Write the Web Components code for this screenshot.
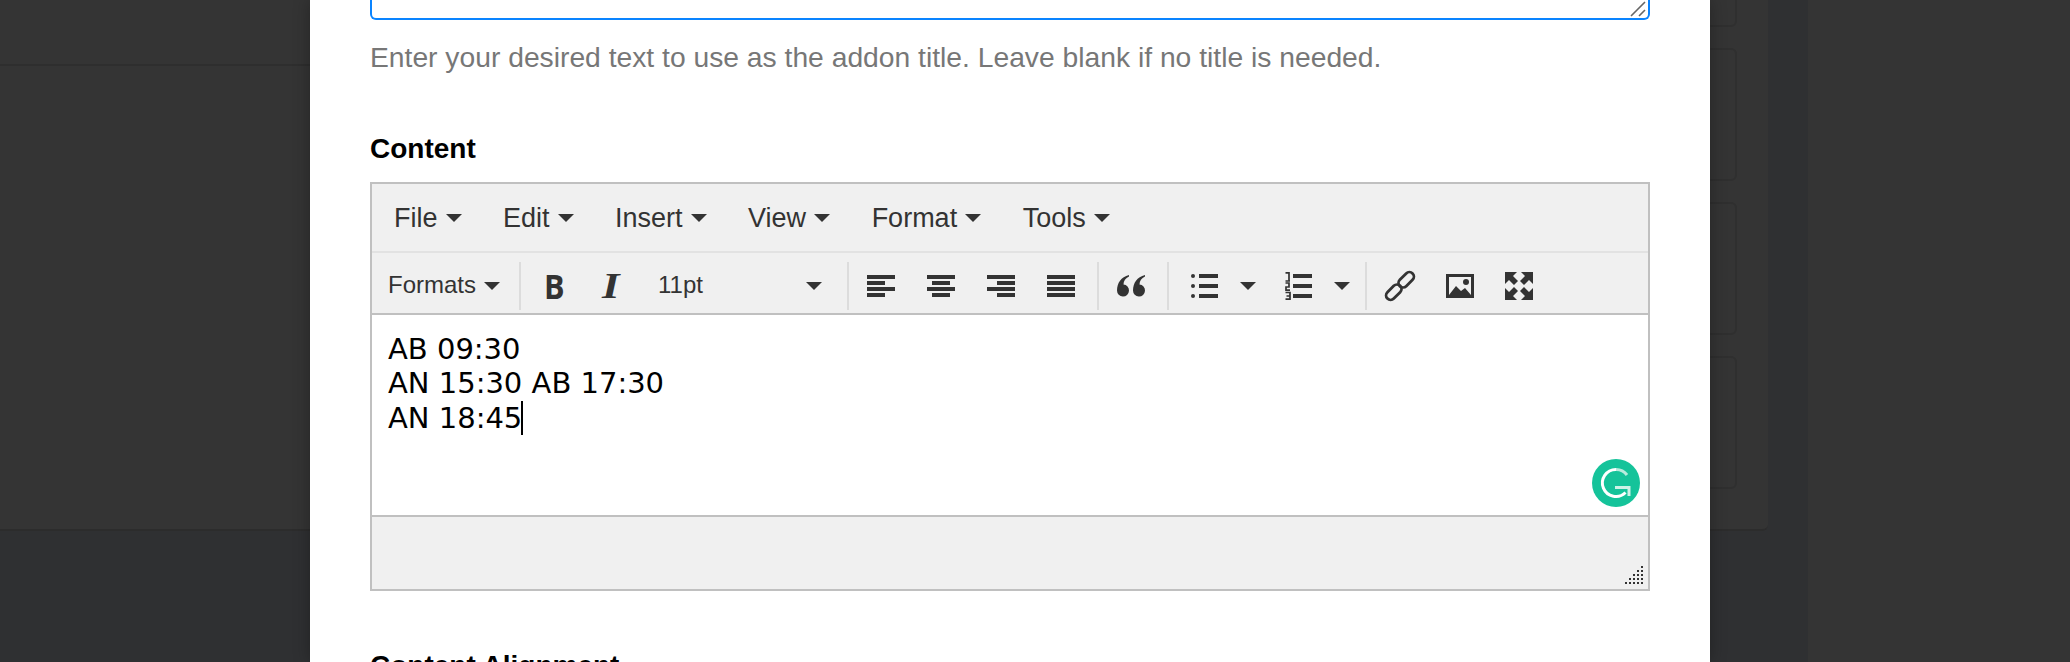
<!DOCTYPE html>
<html>
<head>
<meta charset="utf-8">
<title>Addon settings</title>
<style>
    html, body { margin: 0; height: 100%; overflow: hidden; background: #2f3032; }
    body { position: relative; font-family: "Liberation Sans", Arial, sans-serif; }
    rich-editor .caret { display: inline-block; width: 2px; height: 34px; background: #000; vertical-align: -7px; margin: 0 -1px 0 -1px; }
</style>
</head>
<body>
<admin-page>
    <admin-card></admin-card>
    <admin-card></admin-card>
    <admin-card></admin-card>
    <admin-card></admin-card>
</admin-page>

<addon-modal>
    <form-note>Enter your desired text to use as the addon title. Leave blank if no title is needed.</form-note>
    <form-label class="content">Content</form-label>
    <rich-editor>
        <p>AB 09:30</p>
        <p>AN 15:30 AB 17:30</p>
        <p>AN 18:45<span class="caret"></span></p>
    </rich-editor>
    <form-label class="align">Content Alignment</form-label>
</addon-modal>

<script>
class AdminPage extends HTMLElement {
    constructor() {
        super()
        this.attachShadow({mode: 'open'})
        this.shadowRoot.innerHTML = `
            <style>
                :host { display: flex; height: 662px; background: #2f3032; }
                .main { width: 1808px; flex: none; }
                .panel {
                    width: 1768px;
                    height: 531px;
                    box-sizing: border-box;
                    background: #343434;
                    border-bottom: 2px solid #2c2c2c;
                    border-bottom-right-radius: 6px;
                    overflow: hidden;
                }
                .head { height: 66px; width: 1000px; border-bottom: 2px solid #2e2e2e; box-sizing: border-box; }
                .cards {
                    display: flex;
                    flex-direction: column;
                    gap: 21px;
                    width: 400px;
                    margin: -172px 31px 0 auto;
                }
                .side { flex: 1; background: #343434; }
            </style>
            <div class="main">
                <div class="panel">
                    <div class="head"></div>
                    <div class="cards"><slot></slot></div>
                </div>
            </div>
            <div class="side"></div>`
    }
}

class AdminCard extends HTMLElement {
    constructor() {
        super()
        this.attachShadow({mode: 'open'})
        this.shadowRoot.innerHTML = `
            <style>
                :host {
                    display: block;
                    height: 133px;
                    box-sizing: border-box;
                    border: 2px solid #2f2f2f;
                    border-radius: 6px;
                }
            </style>`
    }
}

class AddonModal extends HTMLElement {
    constructor() {
        super()
        this.attachShadow({mode: 'open'})
        this.shadowRoot.innerHTML = `
            <style>
                :host {
                    display: block;
                    position: absolute;
                    left: 310px;
                    top: 0;
                    width: 1400px;
                    height: 662px;
                    box-sizing: border-box;
                    padding: 0 60px;
                    background: #fff;
                    overflow: hidden;
                    box-shadow: 0 0 16px rgba(0,0,0,.3);
                }
                .title-input {
                    height: 20px;
                    box-sizing: border-box;
                    border: 2px solid #0a84ff;
                    border-top: 0;
                    border-radius: 0 0 6px 6px;
                    position: relative;
                }
                .grip { position: absolute; right: 2px; bottom: 1px; display: block; }
            </style>
            <div class="title-input">
                <svg class="grip" width="16" height="16" viewBox="0 0 16 16">
                    <path d="M1 15L15 1M9 15L15 9" stroke="#666" stroke-width="1.6" fill="none"/>
                </svg>
            </div>
            <slot></slot>`
    }
}

class FormNote extends HTMLElement {
    constructor() {
        super()
        this.attachShadow({mode: 'open'})
        this.shadowRoot.innerHTML = `
            <style>
                :host {
                    display: block;
                    margin-top: 20px;
                    font: 28.26px/34px "Liberation Sans", Arial, sans-serif;
                    color: #777;
                    white-space: nowrap;
                }
            </style>
            <slot></slot>`
    }
}

class FormLabel extends HTMLElement {
    constructor() {
        super()
        this.attachShadow({mode: 'open'})
        this.shadowRoot.innerHTML = `
            <style>
                :host {
                    display: block;
                    font: bold 28px/36px "Liberation Sans", Arial, sans-serif;
                    color: #000;
                    white-space: nowrap;
                }
                :host(.content) { margin-top: 57px; margin-bottom: 15px; }
                :host(.align) { margin-top: 57px; }
            </style>
            <slot></slot>`
    }
}

class MenuItem extends HTMLElement {
    constructor() {
        super()
        this.attachShadow({mode: 'open'})
        this.shadowRoot.innerHTML = `
            <style>
                :host {
                    display: inline-flex;
                    align-items: center;
                    gap: 8px;
                    font: 27px/36px "Liberation Sans", Arial, sans-serif;
                    color: #333;
                    white-space: nowrap;
                }
                i {
                    width: 0; height: 0;
                    margin-top: 1px;
                    border-top: 8px solid #333;
                    border-left: 8px solid transparent;
                    border-right: 8px solid transparent;
                }
            </style>
            <slot></slot><i></i>`
    }
}

const icons = {
    left: '<path d="M0 0h28v4H0zM0 6h18v4H0zM0 12h28v4H0zM0 18h18v4H0z"/>',
    center: '<path d="M0 0h28v4H0zM5 6h18v4H5zM0 12h28v4H0zM5 18h18v4H5z"/>',
    right: '<path d="M0 0h28v4H0zM10 6h18v4H10zM0 12h28v4H0zM10 18h18v4H10z"/>',
    justify: '<path d="M0 0h28v4H0zM0 6h28v4H0zM0 12h28v4H0zM0 18h28v4H0z"/>',
    quote: '<path d="M12 0C4 2 0 8 0 15.5a6 6 0 1 0 6.5-6C6.5 6 8.5 3 12 1.5zM28 0c-8 2-12 8-12 15.5a6 6 0 1 0 6.5-6c0-3.500 2-6.500 5.500-8z"/>',
    bullist: '<path d="M8 2h19v4H8zM8 12h19v4H8zM8 22h19v4H8z"/><circle cx="2" cy="4" r="2"/><circle cx="2" cy="14" r="2"/><circle cx="2" cy="24" r="2"/>',
    numlist: '<path d="M8 2h19v4H8zM8 12h19v4H8zM8 22h19v4H8z"/><path d="M.5 .9H4V9M.5 9H5M.5 11H4V15H1V18.200H5M.5 20.500H5V27.200H.5M1.500 24H5" fill="none" stroke="#333" stroke-width="1.700"/>',
    link: '<g fill="none" stroke="#333" stroke-width="2.800"><rect x="-10" y="-4.500" width="18" height="9" rx="4.500" transform="translate(9.500 20.500) rotate(-45)"/><rect x="-8" y="-4.500" width="18" height="9" rx="4.500" transform="translate(20.500 9.500) rotate(-45)"/></g>',
    image: '<path fill-rule="evenodd" d="M0 2h28v24H0zM3 5v18h22V5z"/><path d="M3 23l7-9 5 5 4-3 6 7z"/><circle cx="20" cy="10" r="3"/>',
    full: '<path d="M0 0h12L8 4l5 5-4 4-5-5-4 4zM28 0H16l4 4-5 5 4 4 5-5 4 4zM0 28h12l-4-4 5-5-4-4-5 5-4-4zM28 28H16l4-4-5-5 4-4 5 5 4-4z"/>'
}

class ToolIcon extends HTMLElement {
    constructor() {
        super()
        this.attachShadow({mode: 'open'})
        const name = this.getAttribute('name')
        const w = this.getAttribute('w') || 28
        const h = this.getAttribute('h') || 28
        this.shadowRoot.innerHTML = `
            <style>
                :host { display: inline-flex; align-items: center; justify-content: center; flex: none; }
                svg { display: block; fill: #333; overflow: visible; }
            </style>
            <svg width="${w}" height="${h}" viewBox="0 0 ${w} ${h}">${icons[name]}</svg>`
    }
}

class RichEditor extends HTMLElement {
    constructor() {
        super()
        this.attachShadow({mode: 'open'})
        this.shadowRoot.innerHTML = `
            <style>
                :host {
                    display: block;
                    height: 409px;
                    box-sizing: border-box;
                    border: 2px solid #c0c0c0;
                    background: #f0f0f0;
                    font-family: "Liberation Sans", Arial, sans-serif;
                }
                .menubar {
                    display: flex;
                    align-items: center;
                    height: 69px;
                    box-sizing: border-box;
                    padding-left: 22px;
                    gap: 41.5px;
                    border-bottom: 2px solid #e2e2e2;
                }
                .toolbar {
                    display: flex;
                    align-items: center;
                    height: 62px;
                    box-sizing: border-box;
                    padding: 6px 0 0 16px;
                    border-bottom: 2px solid #c0c0c0;
                    color: #333;
                    white-space: nowrap;
                }
                .sep { width: 2px; height: 48px; background: #dcdcdc; flex: none; }
                .txt { font-size: 24px; line-height: 32px; flex: none; margin-top: -2px; }
                .caret-down {
                    width: 0; height: 0; flex: none;
                    border-top: 8px solid #333;
                    border-left: 8px solid transparent;
                    border-right: 8px solid transparent;
                }
                .b {
                    font: bold 34px/32px "Open Sans", sans-serif;
                    width: 20px;
                    flex: none;
                    transform: scaleX(.9);
                    transform-origin: 0 50%;
                }
                .it {
                    font: italic bold 36px/32px "Liberation Serif", serif;
                    width: 21px;
                    flex: none;
                    transform: scaleX(1.25);
                    transform-origin: 0 50%;
                }
                .content {
                    position: relative;
                    height: 200px;
                    box-sizing: border-box;
                    background: #fff;
                    padding: 17px 16px 0;
                    font: 29px/34.4px "DejaVu Sans", Verdana, sans-serif;
                    color: #000;
                }
                ::slotted(p) { margin: 0; white-space: nowrap; }
                .status {
                    position: relative;
                    border-top: 2px solid #c0c0c0;
                    height: 74px;
                    box-sizing: border-box;
                }
                .grammarly {
                    position: absolute;
                    right: 8px;
                    bottom: 8px;
                    display: block;
                }
                .resize { position: absolute; right: 5px; bottom: 3px; display: block; fill: #333; }
            </style>
            <div class="menubar">
                <menu-item>File</menu-item>
                <menu-item>Edit</menu-item>
                <menu-item>Insert</menu-item>
                <menu-item>View</menu-item>
                <menu-item>Format</menu-item>
                <menu-item>Tools</menu-item>
            </div>
            <div class="toolbar">
                <span class="txt">Formats</span>
                <span class="caret-down" style="margin-left:8px"></span>
                <span class="sep" style="margin-left:19px"></span>
                <span class="b" style="margin-left:23px">B</span>
                <span class="it" style="margin-left:38px">I</span>
                <span class="txt" style="margin-left:35px;width:130px">11pt</span>
                <span class="caret-down" style="margin-left:18px"></span>
                <span class="sep" style="margin-left:25px"></span>
                <tool-icon name="left" h="22" style="margin-left:18px"></tool-icon>
                <tool-icon name="center" h="22" style="margin-left:32px"></tool-icon>
                <tool-icon name="right" h="22" style="margin-left:32px"></tool-icon>
                <tool-icon name="justify" h="22" style="margin-left:32px"></tool-icon>
                <span class="sep" style="margin-left:22px"></span>
                <tool-icon name="quote" h="22" style="margin-left:18px"></tool-icon>
                <span class="sep" style="margin-left:22px"></span>
                <tool-icon name="bullist" w="27" style="margin-left:22px"></tool-icon>
                <span class="caret-down" style="margin-left:22px"></span>
                <tool-icon name="numlist" w="27" style="margin-left:29px"></tool-icon>
                <span class="caret-down" style="margin-left:22px"></span>
                <span class="sep" style="margin-left:15px"></span>
                <tool-icon name="link" w="30" h="30" style="margin-left:18px"></tool-icon>
                <tool-icon name="image" style="margin-left:31px"></tool-icon>
                <tool-icon name="full" style="margin-left:31px"></tool-icon>
            </div>
            <div class="content">
                <slot></slot>
                <svg class="grammarly" width="48" height="48" viewBox="0 0 48 48" fill="none" stroke-width="3">
                    <circle cx="24" cy="24" r="24" fill="#15c39a"/>
                    <path d="M24 10.500A13.500 13.500 0 1 0 33.500 33.500" stroke="#fff"/>
                    <path d="M24 10.500A13.500 13.500 0 0 1 35 16" stroke="#b8ebdd"/>
                    <path d="M23 28.500H37V37" stroke="#cdf2e7"/>
                </svg>
            </div>
            <div class="status">
                <svg class="resize" width="20" height="20" viewBox="0 0 20 20">
                    <path d="M18 0h2v2h-2zM18 4h2v2h-2zM14 4h2v2h-2zM18 8h2v2h-2zM14 8h2v2h-2zM10 8h2v2h-2zM18 12h2v2h-2zM14 12h2v2h-2zM10 12h2v2h-2zM6 12h2v2H6zM18 16h2v2h-2zM14 16h2v2h-2zM10 16h2v2h-2zM6 16h2v2H6zM2 16h2v2H2z"/>
                </svg>
            </div>`
    }
}

customElements.define('admin-page', AdminPage)
customElements.define('admin-card', AdminCard)
customElements.define('addon-modal', AddonModal)
customElements.define('form-note', FormNote)
customElements.define('form-label', FormLabel)
customElements.define('menu-item', MenuItem)
customElements.define('tool-icon', ToolIcon)
customElements.define('rich-editor', RichEditor)
</script>
</body>
</html>
